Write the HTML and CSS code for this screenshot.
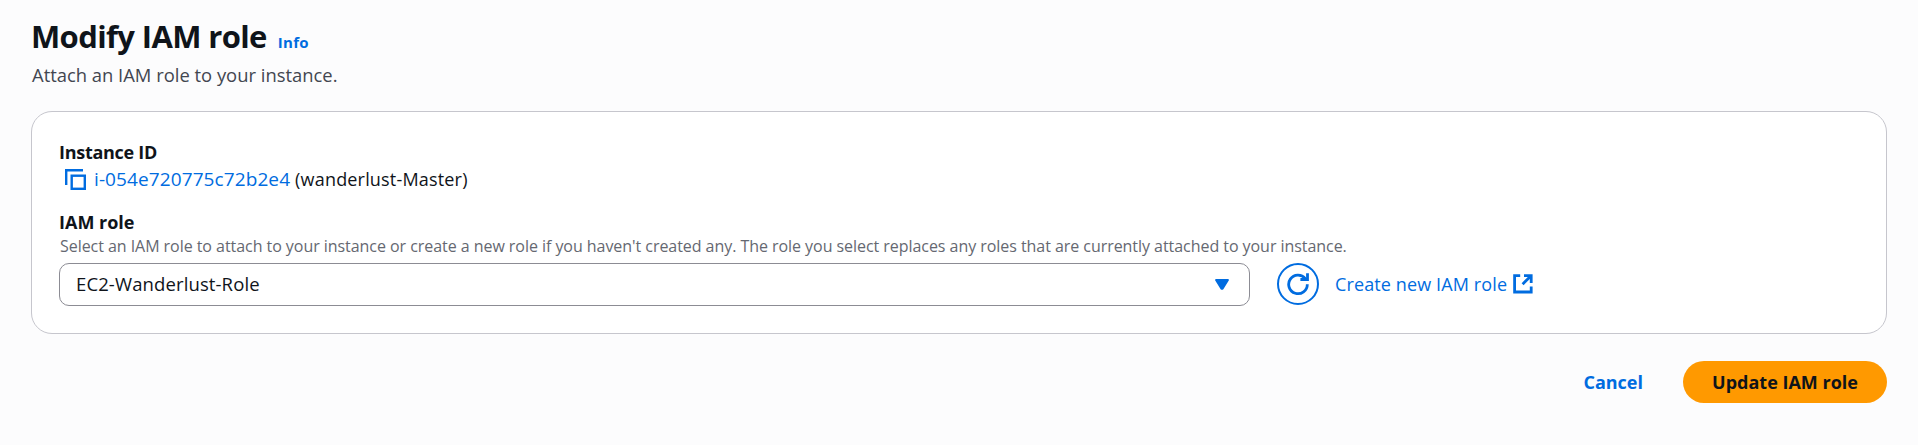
FILE: index.html
```html
<!DOCTYPE html>
<html lang="en">
<head>
<meta charset="utf-8">
<title>Modify IAM role</title>
<link rel="stylesheet" href="styles.css">
</head>
<body>
<main class="page">
  <header class="page-header">
    <div class="title-row">
      <h1 class="title">Modify IAM role</h1>
      <a class="info-link">Info</a>
    </div>
    <p class="subtitle">Attach an IAM role to your instance.</p>
  </header>

  <section class="card">
    <div class="label label-instance">Instance ID</div>
    <div class="instance">
      <svg class="copy-icon" width="22" height="22" viewBox="0 0 22 22" fill="none" stroke="currentColor" stroke-width="2.4">
        <path d="M1.2 16V1.2H18"/>
        <rect x="6.7" y="6.7" width="13.1" height="13.1"/>
      </svg>
      <a class="instance-id">i-054e720775c72b2e4</a>
      <span class="instance-name">(wanderlust-Master)</span>
    </div>

    <div class="label">IAM role</div>
    <p class="description">Select an IAM role to attach to your instance or create a new role if you haven't created any. The role you select replaces any roles that are currently attached to your instance.</p>
    <div class="role-row">
      <div class="select" role="combobox">
        <span class="select-value">EC2-Wanderlust-Role</span>
        <svg width="14" height="11" viewBox="0 0 14 11"><path d="M1 1H13L7.6 9.8H6.4Z" fill="currentColor" stroke="currentColor" stroke-width="1.8" stroke-linejoin="round"/></svg>
      </div>
      <button class="refresh" type="button" aria-label="Refresh">
        <svg width="24" height="24" viewBox="0 0 24 24" fill="none" stroke="currentColor" stroke-width="2.8">
          <path d="M21.3 12.3A9.3 9.3 0 1 1 19.3 6.6"/>
          <path d="M21.5 1.2V7.5H14.4"/>
        </svg>
      </button>
      <a class="create-link"><span>Create new IAM role</span>
        <svg width="20" height="20" viewBox="0 0 20 20" fill="none" stroke="currentColor" stroke-width="2.8">
          <path d="M7.2 1.6H1.6V18H18.2V12.6"/>
          <path d="M11 1.6H18.2V9M17.8 2L9.6 10.2"/>
        </svg>
      </a>
    </div>
  </section>

  <footer class="actions">
    <button class="btn btn-link" type="button">Cancel</button>
    <button class="btn btn-primary" type="button">Update IAM role</button>
  </footer>
</main>
</body>
</html>
```
FILE: styles.css
```css
* { box-sizing: border-box; }
body {
  margin: 0;
  background: #fcfcfd;
  color: #0f141a;
  font: 18px/24px "Open Sans", "Liberation Sans", sans-serif;
}
h1, p { margin: 0; }
svg { display: block; flex: none; }
a { color: #006ce0; }

.page { padding: 18px 31px 0; }
.title-row { display: flex; align-items: baseline; gap: 11px; }
.title { font-size: 31px; line-height: 36px; font-weight: 700; letter-spacing: -0.63px; }
.info-link { font-size: 15px; line-height: 20px; font-weight: 700; letter-spacing: 0.3px; }
.subtitle { margin-top: 9px; padding-left: 1px; color: #424650; font-size: 18.4px; letter-spacing: 0; }

.card {
  height: 223px;
  margin-top: 24px;
  padding: 28px 27px 0;
  border: 1px solid #c6c6cd;
  border-radius: 21px;
  background: #fff;
}
.label { font-weight: 700; }
.label-instance { letter-spacing: -0.28px; }
.instance { display: flex; align-items: center; margin: 3px 0 19px; padding-left: 6px; }
.copy-icon { color: #006ce0; margin: 2px 7px 0 0; }
.instance-id { font-size: 19px; letter-spacing: 0.1px; margin-right: 5px; }
.instance-name { letter-spacing: 0.18px; }
.description {
  margin: 2px 0 7px;
  padding-left: 1px;
  color: #656871;
  font-size: 16px;
  line-height: 20px;
  letter-spacing: -0.049px;
  white-space: nowrap;
}

.role-row { display: flex; align-items: flex-start; }
.select {
  display: flex;
  align-items: center;
  justify-content: space-between;
  width: 1191px;
  height: 43px;
  padding: 0 20px 0 16px;
  border: 1px solid #8c8c94;
  border-radius: 10px;
}
.select-value { padding-bottom: 1px; font-size: 18.5px; letter-spacing: 0.12px; }
.select svg { color: #006ce0; }
.refresh {
  display: flex;
  align-items: center;
  justify-content: center;
  width: 42px;
  height: 42px;
  margin-left: 27px;
  padding: 0;
  border: 2px solid #006ce0;
  border-radius: 50%;
  background: #fff;
  color: #006ce0;
}
.create-link { display: flex; align-items: center; height: 42px; margin-left: 16px; gap: 6px; letter-spacing: 0.12px; }

.actions { display: flex; justify-content: flex-end; align-items: center; margin-top: 27px; }
.btn {
  height: 42px;
  padding: 0;
  border: 0;
  border-radius: 21px;
  font: inherit;
  font-weight: 700;
}
.btn-link { margin-right: 40px; background: none; color: #006ce0; }
.btn-primary { width: 204px; background: #ff9900; color: #0f141a; }
```
